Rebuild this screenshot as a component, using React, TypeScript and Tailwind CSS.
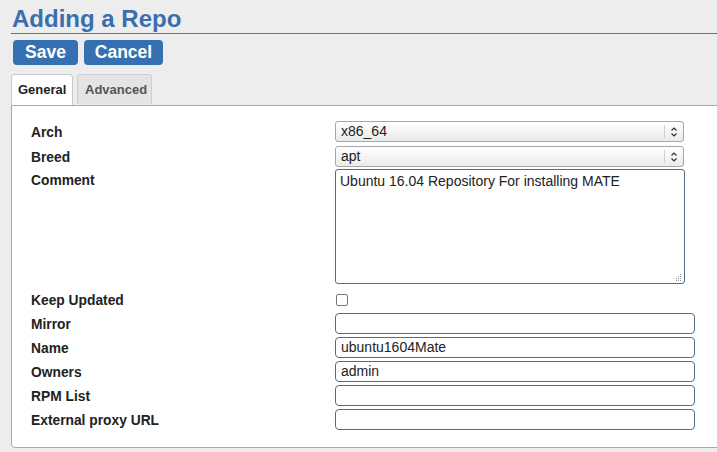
import React from "react";

const font = { fontFamily: '"Liberation Sans", Arial, sans-serif' };

function Chevrons() {
  return (
    <svg width="8" height="12" viewBox="0 0 8 12" fill="none">
      <path d="M1.5 4.5 L4 2 L6.5 4.5" stroke="#333" strokeWidth="1.2" />
      <path d="M1.5 7.5 L4 10 L6.5 7.5" stroke="#333" strokeWidth="1.2" />
    </svg>
  );
}

function Select({ value }: { value: string }) {
  return (
    <div className="flex h-[21px] w-[349px] items-center rounded-[3px] border border-[#a6a6a6] bg-linear-to-b from-white to-[#ebebeb]">
      <span className="flex-1 pl-[5px] text-[14px] leading-[19px] text-[#222]">{value}</span>
      <div className="my-[3px] h-[13px] w-px bg-[#d0d0d0]" />
      <div className="flex w-[18px] items-center justify-center">
        <Chevrons />
      </div>
    </div>
  );
}

function Input({ value }: { value?: string }) {
  return (
    <div className="h-[21px] w-[360px] rounded-[4px] border border-[#4f6d90] bg-white px-[5px] text-[14px] leading-[19px] text-[#222]">
      {value}
    </div>
  );
}

function Row({ label, children }: { label: string; children: React.ReactNode }) {
  return (
    <div className="flex items-start">
      <div className="h-[21px] w-[304px] text-[13.8px] font-bold leading-[23px] text-[#222]">{label}</div>
      {children}
    </div>
  );
}

export default function App() {
  return (
    <div className="h-[452px] w-[717px] overflow-hidden bg-[#ededed]" style={font}>
      <div className="pl-[11px]">
        <div className="border-b border-[#707070] pl-[1px] pt-[5px]">
          <h1 className="text-[24px] font-bold leading-[28px] text-[#3a6fae]">Adding a Repo</h1>
        </div>
        <div className="mt-[6px] flex gap-[6px] pl-[2px]">
          <button className="h-[25px] w-[65px] rounded-[4px] bg-[#3570b2] text-[17.5px] font-bold leading-[25px] text-white">
            Save
          </button>
          <button className="h-[25px] w-[79px] rounded-[4px] bg-[#3570b2] text-[17.5px] font-bold leading-[25px] text-white">
            Cancel
          </button>
        </div>
        <div className="relative z-10 mt-[9px] flex gap-[4px]">
          <div className="h-[31px] w-[62px] rounded-t-[4px] border border-b-0 border-[#c8c8c8] bg-white pl-[6px] text-[13px] font-bold leading-[30px] text-[#222]">
            General
          </div>
          <div className="h-[30px] w-[75px] rounded-t-[3px] border border-b-0 border-[#cfcfcf] bg-[#e4e4e4] pl-[7px] text-[13px] font-bold leading-[30px] text-[#555]">
            Advanced
          </div>
        </div>
        <div className="-mr-[6px] h-[343px] rounded-bl-[4px] border border-[#a9a9a9] bg-white pl-[19px] pt-[15px]">
          <div className="flex flex-col">
            <Row label="Arch">
              <Select value="x86_64" />
            </Row>
            <div className="mt-[4px]">
              <Row label="Breed">
                <Select value="apt" />
              </Row>
            </div>
            <div className="mt-[2px]">
              <Row label="Comment">
                <div className="relative h-[115px] w-[350px] rounded-[3px] border border-[#4f6d90] bg-white px-[4px] pt-[3px] text-[14px] leading-[16px] text-[#222]">
                  Ubuntu 16.04 Repository For installing MATE
                  <svg className="absolute bottom-[2px] right-[2px]" width="7" height="7" viewBox="0 0 7 7">
                    <rect x="5" y="0" width="1" height="1" fill="#999" />
                    <rect x="3" y="2" width="1" height="1" fill="#999" />
                    <rect x="5" y="2" width="1" height="1" fill="#999" />
                    <rect x="1" y="4" width="1" height="1" fill="#999" />
                    <rect x="3" y="4" width="1" height="1" fill="#999" />
                    <rect x="5" y="4" width="1" height="1" fill="#999" />
                    <rect x="1" y="6" width="1" height="1" fill="#999" />
                    <rect x="3" y="6" width="1" height="1" fill="#999" />
                    <rect x="5" y="6" width="1" height="1" fill="#999" />
                  </svg>
                </div>
              </Row>
            </div>
            <div className="mt-[5px]">
              <Row label="Keep Updated">
                <div className="h-[21px] pl-[1px] pt-[5px]">
                  <div className="h-[12px] w-[12px] rounded-[2px] border border-[#767676] bg-white" />
                </div>
              </Row>
            </div>
            <div className="mt-[3px] flex flex-col gap-[3px]">
              <Row label="Mirror">
                <Input />
              </Row>
              <Row label="Name">
                <Input value="ubuntu1604Mate" />
              </Row>
              <Row label="Owners">
                <Input value="admin" />
              </Row>
              <Row label="RPM List">
                <Input />
              </Row>
              <Row label="External proxy URL">
                <Input />
              </Row>
            </div>
          </div>
        </div>
      </div>
    </div>
  );
}
